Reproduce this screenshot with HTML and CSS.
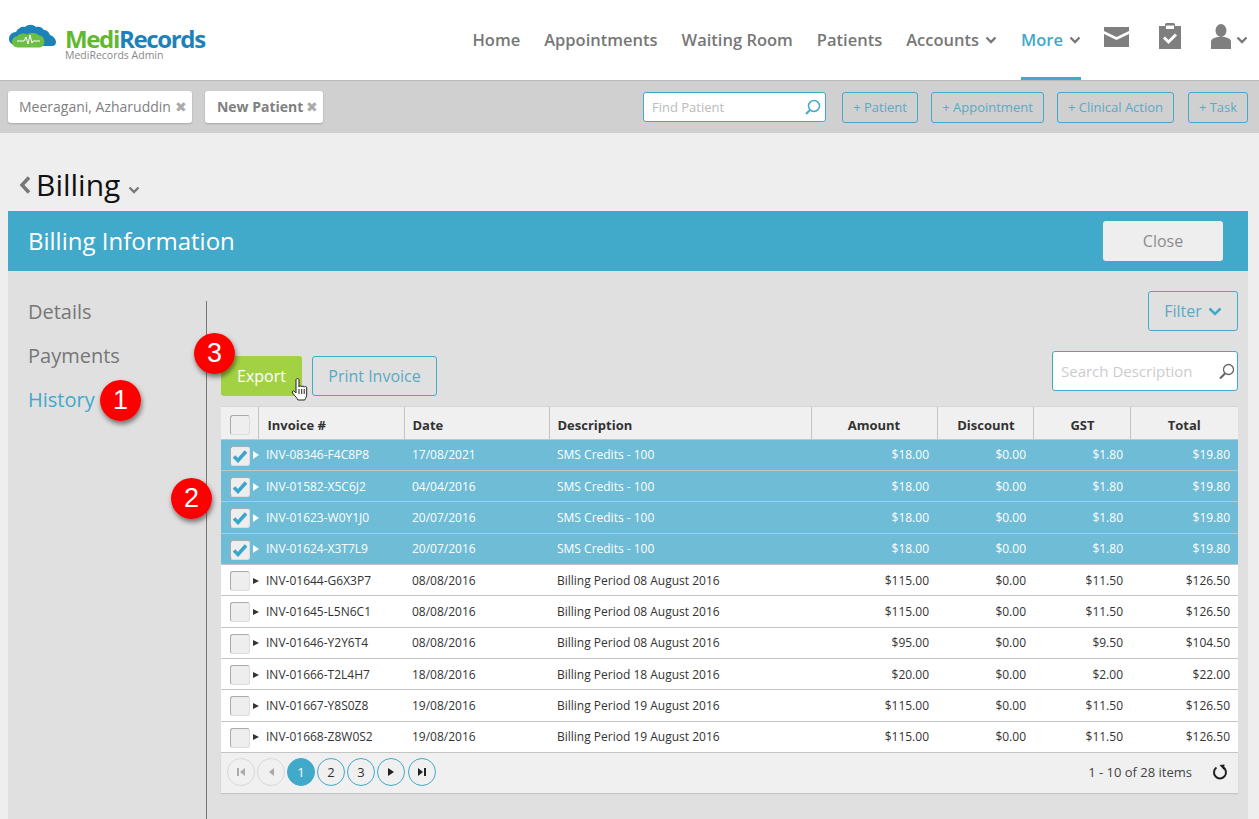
FILE: index.html
```html
<!doctype html>
<html lang="en">

<head>
    <meta charset="utf-8">
    <title>Billing</title>
    <link rel="stylesheet" href="styles.css">
</head>

<body>
    <header class="top-bar">
        <div class="logo">
            <svg class="logo__mark" width="50" height="28" viewBox="0 0 50 28">
                <path d="M0 15c0-4 3-7 7-7 2-4 6-6 9-5 3-3 8-3 11 0 3-1 6 0 8 3 3 0 5 2 6 5 3 1 6 4 6 7 0 2-1 4-4 4H11C4 22 0 19 0 15z" fill="#1d82b8"/>
                <path d="M3 17c0-3 3-5 5-5 2-3 7-4 10-2 3-2 9-2 12 1 3 0 5 2 5 5 1 2 0 6-4 7H9c-4 0-6-3-6-6z" fill="#6cbf45" transform="translate(0 0.5)"/>
                <path d="M8 17h7l2-4 2 7 2-9 2 8 1-2h7" fill="none" stroke="#fff" stroke-width="1"/>
            </svg>
            <div class="logo__text">
                <div class="logo__name"><span class="logo__medi">Medi</span>Records</div>
                <div class="logo__sub">MediRecords Admin</div>
            </div>
        </div>
        <nav class="main-nav">
            <a class="main-nav__item">Home</a>
            <a class="main-nav__item">Appointments</a>
            <a class="main-nav__item">Waiting Room</a>
            <a class="main-nav__item">Patients</a>
            <a class="main-nav__item">Accounts
                <svg class="chev chev--nav" width="12" height="8" viewBox="0 0 12 8"><path d="M1.5 1.5 6 6l4.5-4.5" /></svg>
            </a>
            <a class="main-nav__item main-nav__item--active">More
                <svg class="chev chev--nav" width="12" height="8" viewBox="0 0 12 8"><path d="M1.5 1.5 6 6l4.5-4.5" /></svg>
            </a>
            <svg class="nav-icon nav-icon--mail" width="25" height="20" viewBox="0 0 25 20">
                <path d="M0 0h25v4L12.5 10 0 4z" fill="#7f7f7f"/>
                <path d="M0 7l12.5 6L25 7v13H0z" fill="#7f7f7f"/>
            </svg>
            <svg class="nav-icon nav-icon--tasks" width="22" height="26" viewBox="0 0 22 26">
                <path d="M0 3h6V1.500C6 .5 7 0 8 0h6c1 0 2 .5 2 1.500V3h6v23H0z" fill="#7f7f7f"/>
                <path d="M7 2.500h8V6H7z" fill="#fff"/>
                <path d="M5 14.500l4.500 4.500L17 11.500" fill="none" stroke="#fff" stroke-width="3"/>
            </svg>
            <svg class="nav-icon nav-icon--user" width="20" height="25" viewBox="0 0 20 25">
                <ellipse cx="10" cy="6.500" rx="5.500" ry="6.500" fill="#7f7f7f"/>
                <path d="M0 25v-7c0-3 3-4 6-5h8c3 1 6 2 6 5v7z" fill="#7f7f7f"/>
            </svg>
            <svg class="chev chev--user" width="12" height="8" viewBox="0 0 12 8"><path d="M1.5 1.5 6 6l4.5-4.5" /></svg>
        </nav>
    </header>

    <div class="sub-bar">
        <div class="tab">Meeragani, Azharuddin <span class="tab__x">&#10006;</span></div>
        <div class="tab tab--bold">New Patient <span class="tab__x">&#10006;</span></div>
        <div class="find">
            <span class="find__text">Find Patient</span>
            <svg width="17" height="17" viewBox="0 0 17 17">
                <circle cx="10" cy="7" r="5.5" fill="none" stroke="#41a9c9" stroke-width="1.5"/>
                <path d="M6 11l-4 4" stroke="#41a9c9" stroke-width="2"/>
            </svg>
        </div>
        <a class="add-btn add-btn--patient">+ Patient</a>
        <a class="add-btn add-btn--appt">+ Appointment</a>
        <a class="add-btn add-btn--clinical">+ Clinical Action</a>
        <a class="add-btn add-btn--task">+ Task</a>
    </div>

    <div class="page-title">
        <svg width="12" height="18" viewBox="0 0 12 18"><path d="M10 1.5 3 9l7 7.5" fill="none" stroke="#777" stroke-width="3.5"/></svg>
        <span class="page-title__text">Billing</span>
        <svg class="chev chev--title" width="12" height="8" viewBox="0 0 12 8"><path d="M1.5 1.5 6 6l4.5-4.5" /></svg>
    </div>

    <main class="billing">
        <div class="billing__head">
            <h1>Billing Information</h1>
            <a class="close-btn">Close</a>
        </div>
        <div class="billing__body">
            <aside class="side-menu">
                <a>Details</a>
                <a>Payments</a>
                <a class="active">History</a>
            </aside>
            <section class="content">
                <div class="filter-row">
                    <a class="filter-btn">Filter
                        <svg width="14" height="9" viewBox="0 0 14 9"><path d="M1.5 1.5 7 7l5.5-5.5" fill="none" stroke="#41a9c9" stroke-width="2.5"/></svg>
                    </a>
                </div>
                <div class="tool-row">
                    <a class="export-btn">Export</a>
                    <a class="print-btn">Print Invoice</a>
                    <div class="search">
                        <span class="search__text">Search Description</span>
                        <svg width="17" height="17" viewBox="0 0 17 17">
                            <circle cx="10.5" cy="6.5" r="5" fill="none" stroke="#666" stroke-width="1.3"/>
                            <path d="M7 10.5l-5 5" stroke="#666" stroke-width="2.2"/>
                        </svg>
                    </div>
                </div>

                <table class="grid">
                    <colgroup>
                        <col class="c-check"><col class="c-inv"><col class="c-date"><col class="c-desc">
                        <col class="c-amount"><col class="c-disc"><col class="c-gst"><col class="c-total">
                    </colgroup>
                    <thead>
                        <tr>
                            <th><span class="box box--head"></span></th>
                            <th class="left">Invoice #</th>
                            <th class="left">Date</th>
                            <th class="left">Description</th>
                            <th>Amount</th>
                            <th class="shift">Discount</th>
                            <th class="shift">GST</th>
                            <th>Total</th>
                        </tr>
                    </thead>
                    <tbody id="rows"></tbody>
                </table>
                <div class="pager">
                    <span class="pg pg--off"><svg width="10" height="10" viewBox="0 0 10 10"><path d="M1 1h2v8H1zM9 1v8L4 5z" fill="#aaa"/></svg></span>
                    <span class="pg pg--off"><svg width="10" height="10" viewBox="0 0 10 10"><path d="M8 1v8L3 5z" fill="#aaa"/></svg></span>
                    <span class="pg pg--on">1</span>
                    <span class="pg">2</span>
                    <span class="pg">3</span>
                    <span class="pg"><svg width="10" height="10" viewBox="0 0 10 10"><path d="M2 1v8l6-4z" fill="#222"/></svg></span>
                    <span class="pg pg--last"><svg width="10" height="10" viewBox="0 0 10 10"><path d="M1 1v8l5-4zM7 1h2v8H7z" fill="#222"/></svg></span>
                    <span class="pager__info">1 - 10 of 28 items</span>
                    <svg class="pager__refresh" width="16" height="16" viewBox="0 0 16 16">
                        <path d="M4.5 3.5a6 6 0 1 0 6.5-.3" fill="none" stroke="#222" stroke-width="2"/>
                        <path d="M7.5 1 12.5 .5 12 6z" fill="#222"/>
                    </svg>
                </div>
            </section>
        </div>
    </main>

    <span class="badge badge--1">1</span>
    <span class="badge badge--2">2</span>
    <span class="badge badge--3">3</span>
    <svg class="hand" width="18" height="24" viewBox="0 0 18 24">
        <path d="M5 2c0-2 3-2 3 0v7c.3-1.500 2.500-1.500 2.700 0 .3-1.300 2.300-1.300 2.500.2.300-1 2.500-1 2.500.5V16c0 3-1 4-2 6H7c-1-2-3-4-5.500-7-.8-1.500.8-2.800 2-1.500L5 15z" fill="#fff" stroke="#222" stroke-width="1"/>
        <path d="M8 11v5M10.700 11v5M13.200 11v5" stroke="#222" stroke-width="1"/>
    </svg>

    <script>
        var data = [
            ['INV-08346-F4C8P8', '17/08/2021', 'SMS Credits - 100', '$18.00', '$0.00', '$1.80', '$19.80', 1],
            ['INV-01582-X5C6J2', '04/04/2016', 'SMS Credits - 100', '$18.00', '$0.00', '$1.80', '$19.80', 1],
            ['INV-01623-W0Y1J0', '20/07/2016', 'SMS Credits - 100', '$18.00', '$0.00', '$1.80', '$19.80', 1],
            ['INV-01624-X3T7L9', '20/07/2016', 'SMS Credits - 100', '$18.00', '$0.00', '$1.80', '$19.80', 1],
            ['INV-01644-G6X3P7', '08/08/2016', 'Billing Period 08 August 2016', '$115.00', '$0.00', '$11.50', '$126.50', 0],
            ['INV-01645-L5N6C1', '08/08/2016', 'Billing Period 08 August 2016', '$115.00', '$0.00', '$11.50', '$126.50', 0],
            ['INV-01646-Y2Y6T4', '08/08/2016', 'Billing Period 08 August 2016', '$95.00', '$0.00', '$9.50', '$104.50', 0],
            ['INV-01666-T2L4H7', '18/08/2016', 'Billing Period 18 August 2016', '$20.00', '$0.00', '$2.00', '$22.00', 0],
            ['INV-01667-Y8S0Z8', '19/08/2016', 'Billing Period 19 August 2016', '$115.00', '$0.00', '$11.50', '$126.50', 0],
            ['INV-01668-Z8W0S2', '19/08/2016', 'Billing Period 19 August 2016', '$115.00', '$0.00', '$11.50', '$126.50', 0]
        ];
        var check = '<svg width="16" height="14" viewBox="0 0 16 14"><path d="M2 7.5l4 4L14 2.5" fill="none" stroke="#3ba6cc" stroke-width="3.5"/></svg>';
        var html = '';

        for (var i = 0; i < data.length; i++) {
            var d = data[i];
            html += '<tr class="' + (d[7] ? 'sel' : '') + '">' +
                '<td colspan="2"><div class="inv"><span class="box">' + (d[7] ? check : '') + '</span><span class="arrow"></span>' + d[0] + '</div></td>' +
                '<td class="left">' + d[1] + '</td><td class="left">' + d[2] + '</td>' +
                '<td class="pad8">' + d[3] + '</td><td>' + d[4] + '</td><td>' + d[5] + '</td><td class="pad8">' + d[6] + '</td></tr>';
        }
        document.getElementById('rows').innerHTML = html;
    </script>
</body>

</html>
```

FILE: styles.css
```css
* {
    box-sizing: border-box;
    padding: 0;
    margin: 0;
}

html, body {
    height: 819px;
    overflow: hidden;
}

body {
    position: relative;
    background-color: #eee;
    font-family: "Open Sans", "Liberation Sans", sans-serif;
    color: #333;
}

.chev path {
    fill: none;
    stroke: #777;
    stroke-width: 2.3;
}

.chev--nav {
    margin-top: 2px;
}

/* top bar */
.top-bar {
    display: flex;
    align-items: stretch;
    justify-content: space-between;
    height: 81px;
    padding-left: 9px;
    background-color: #fff;
    border-bottom: 1px solid #bbb;
}

.logo {
    display: flex;
    align-items: flex-start;
    gap: 6px;
    padding-top: 24px;
}

.logo__text {
    padding-top: 4px;
}

.logo__name {
    font-size: 24px;
    font-weight: 700;
    line-height: 21px;
    letter-spacing: -1.35px;
    color: #1d82b8;
}

.logo__medi {
    color: #62b92f;
}

.logo__sub {
    margin-top: 1px;
    font-size: 10.5px;
    line-height: 11px;
    color: #888;
}

.main-nav {
    display: flex;
    align-items: stretch;
    padding-right: 11px;
}

.main-nav__item {
    display: flex;
    align-items: center;
    gap: 6px;
    padding: 0 12px 2px;
    font-size: 16.5px;
    font-weight: 600;
    color: #777;
    white-space: nowrap;
}

.main-nav__item--active {
    color: #41a9c9;
    padding: 1px 0 0;
    margin: 0 12px;
    border-bottom: 3px solid #41a9c9;
}

.nav-icon {
    align-self: flex-start;
}

.nav-icon--mail {
    margin: 27px 0 0 11px;
}

.nav-icon--tasks {
    margin: 23px 0 0 30px;
}

.nav-icon--user {
    margin: 24px 0 0 30px;
}

.chev--user {
    align-self: flex-start;
    margin: 36px 0 0 5px;
}

/* patient tabs and quick add */
.sub-bar {
    display: flex;
    align-items: center;
    height: 52px;
    padding: 0 11px 0 8px;
    background-color: #d0d0d0;
}

.tab {
    display: flex;
    align-items: center;
    gap: 4px;
    height: 32px;
    padding: 0 5px 2px 11px;
    margin-right: 13px;
    background-color: #fff;
    border-radius: 3px;
    box-shadow: 0 1px 2px rgba(0, 0, 0, .2);
    font-size: 14px;
    color: #808080;
    white-space: nowrap;
}

.tab--bold {
    gap: 3px;
    font-weight: 700;
    padding-left: 12px;
}

.tab__x {
    font-size: 14px;
    font-weight: 400;
    color: #aaa;
}

.find {
    display: flex;
    align-items: center;
    justify-content: space-between;
    width: 183px;
    height: 30px;
    padding: 0 4px 0 8px;
    margin-left: auto;
    background-color: #fff;
    border: 1px solid #41a9c9;
    border-radius: 3px;
    font-size: 13px;
    color: #bbb;
}

.add-btn {
    display: flex;
    align-items: center;
    justify-content: center;
    height: 31px;
    margin-left: 13px;
    border: 1px solid #41a9c9;
    border-radius: 3px;
    font-size: 13px;
    color: #5ba9c4;
    white-space: nowrap;
}

.add-btn--patient {
    width: 76px;
    margin-left: 16px;
}

.add-btn--appt {
    width: 113px;
}

.add-btn--clinical {
    width: 117px;
}

.add-btn--task {
    width: 60px;
    margin-left: 14px;
}

/* page heading */
.page-title {
    display: flex;
    align-items: center;
    gap: 5px;
    height: 78px;
    padding: 25px 0 0 19px;
    color: #111;
}

.page-title__text {
    font-size: 30px;
    line-height: 40px;
}

.chev--title {
    margin: 10px 0 0 3px;
}

/* billing panel */
.billing {
    margin: 0 11px 0 8px;
}

.billing__head {
    display: flex;
    align-items: center;
    justify-content: space-between;
    height: 60px;
    padding: 0 25px 0 20px;
    background-color: #41a9c9;
}

.billing__head h1 {
    padding-bottom: 2px;
    font-size: 24px;
    font-weight: 400;
    color: #fff;
}

.close-btn {
    display: flex;
    align-items: center;
    justify-content: center;
    width: 120px;
    height: 40px;
    background-color: #eee;
    border-radius: 3px;
    font-size: 16px;
    color: #8c8c8c;
}

.billing__body {
    display: flex;
    height: 548px;
    padding: 30px 10px 0 0;
    background-color: #e0e0e0;
}

.side-menu {
    display: flex;
    flex-direction: column;
    gap: 16px;
    width: 199px;
    padding-left: 20px;
    border-right: 1px solid #777;
    font-size: 20px;
    line-height: 28px;
    color: #777;
}

.side-menu a:first-child {
    margin-top: -3px;
}

.side-menu .active {
    color: #41a9c9;
}

.content {
    flex: 1;
    padding-left: 14px;
}

.filter-row {
    display: flex;
    justify-content: flex-end;
    height: 60px;
    margin-top: -10px;
}

.filter-btn {
    display: flex;
    align-items: center;
    justify-content: center;
    gap: 6px;
    width: 90px;
    height: 40px;
    border: 1px solid #41a9c9;
    border-radius: 3px;
    font-size: 16px;
    color: #5ba9c4;
}

.tool-row {
    display: flex;
    align-items: flex-start;
    gap: 10px;
    height: 55px;
}

.export-btn, .print-btn {
    display: flex;
    align-items: center;
    justify-content: center;
    height: 40px;
    margin-top: 5px;
    border-radius: 3px;
    font-size: 16px;
}

.export-btn {
    width: 81px;
    background-color: #a2d243;
    color: #fff;
}

.print-btn {
    width: 125px;
    border: 1px solid #41a9c9;
    color: #5ba9c4;
}

.search {
    display: flex;
    align-items: center;
    justify-content: space-between;
    width: 186px;
    height: 40px;
    padding: 0 2px 0 8px;
    margin-left: auto;
    background-color: #fff;
    border: 1px solid #41a9c9;
    border-radius: 3px;
    font-size: 15px;
    color: #ccc;
}

/* invoice grid */
.grid {
    width: 100%;
    table-layout: fixed;
    border-collapse: collapse;
    font-size: 12px;
}

.c-check { width: 37px; }
.c-inv { width: 146px; }
.c-date { width: 145px; }
.c-desc { width: 262px; }
.c-amount { width: 126px; }
.c-disc { width: 96px; }
.c-gst { width: 97px; }
.c-total { width: 108px; }

.grid th {
    height: 32.6px;
    padding: 4px 8px 0;
    background-color: #f0f0f0;
    border-top: 1px solid #d6d6d6;
    border-left: 1px solid #c4c4c4;
    border-bottom: 1px solid #c4c4c4;
    font-size: 13px;
    font-weight: 700;
    text-align: center;
    color: #333;
}

.grid th:first-child {
    padding: 3px 0 0 8px;
    border-left: 0;
    text-align: left;
}

.grid th.left {
    text-align: left;
}

.grid th.shift {
    padding-left: 10px;
}

.grid th:nth-child(2) {
    padding-left: 9px;
}

.grid td {
    height: 31.33px;
    padding: 0 7px 0 8px;
    background-color: #fff;
    border-bottom: 1px solid #c4c4c4;
    text-align: right;
    color: #333;
    white-space: nowrap;
}

.grid td.left {
    text-align: left;
}

.grid td.pad8 {
    padding-right: 8px;
}

.inv {
    display: flex;
    align-items: center;
    text-align: left;
}

.grid tr.sel td {
    background-color: #6fbcd6;
    color: #fff;
}

.box {
    display: inline-flex;
    align-items: center;
    justify-content: center;
    width: 20px;
    height: 20px;
    margin: 2px 0 0 1px;
    background-color: #eee;
    border: 1px solid;
    border-color: #aaa #ddd #ddd #aaa;
    border-radius: 3px;
    vertical-align: middle;
}

.box--head {
    margin: 0 0 0 1px;
}

.arrow {
    display: inline-block;
    margin: 1px 7px 0 3px;
    border-top: 3.5px solid transparent;
    border-bottom: 3.5px solid transparent;
    border-left: 6px solid #333;
}

.sel .arrow {
    border-top-width: 4px;
    border-bottom-width: 4px;
    border-left-color: #fff;
}

.pager {
    display: flex;
    align-items: center;
    gap: 2px;
    height: 40px;
    padding: 0 10px 2px 6px;
    background-color: #f0f0f0;
    box-shadow: 0 1px 1px rgba(0, 0, 0, .12);
    font-size: 13px;
}

.pg {
    display: flex;
    align-items: center;
    justify-content: center;
    width: 28px;
    height: 28px;
    border: 1px solid #41a9c9;
    border-radius: 50%;
    color: #333;
}

.pg--last {
    margin-left: 1px;
}

.pg--off {
    border-color: #d8d8d8;
}

.pg--on {
    background-color: #41a9c9;
    color: #fff;
}

.pager__info {
    margin-left: auto;
    margin-right: 18px;
    font-size: 13px;
    color: #444;
}

/* annotations on top of the screenshot */
.badge {
    position: absolute;
    display: flex;
    align-items: center;
    justify-content: center;
    width: 41px;
    height: 41px;
    background: radial-gradient(circle at 50% 40%, #f00 60%, #d80000);
    border-radius: 50%;
    box-shadow: 1px 3px 5px rgba(0, 0, 0, .5);
    font-family: "Liberation Sans", sans-serif;
    font-size: 27px;
    color: #fff;
}

.badge--1 {
    top: 380px;
    left: 100px;
}

.badge--2 {
    top: 478px;
    left: 171px;
}

.badge--3 {
    top: 333px;
    left: 194px;
}

.hand {
    position: absolute;
    top: 378px;
    left: 291px;
}
```
